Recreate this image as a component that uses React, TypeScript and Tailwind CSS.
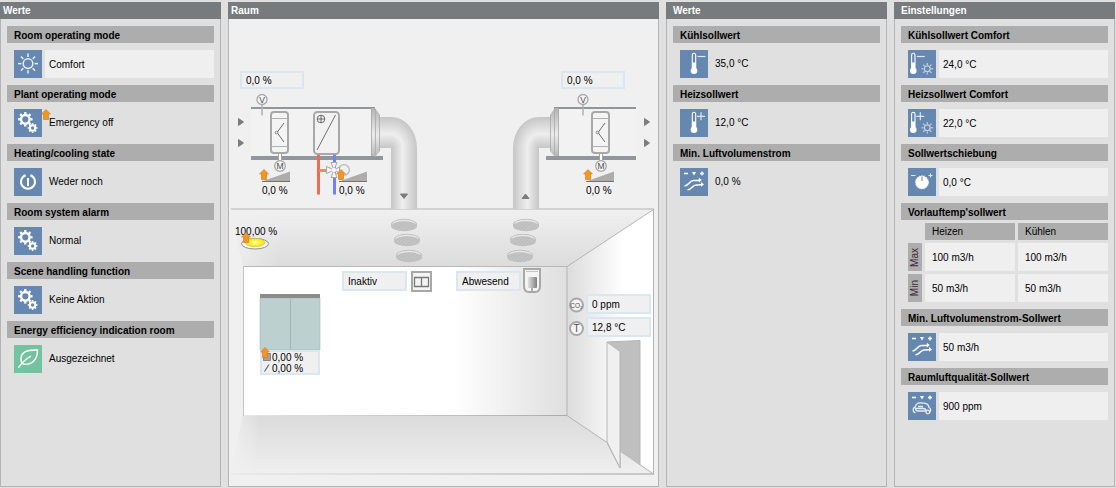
import React from "react"
import clsx from "clsx"

type IconName = 'sun' | 'gears' | 'power' | 'leaf' | 'tempMinus' | 'tempPlus' | 'tempMinusSun' | 'tempPlusSun' | 'dial' | 'airflow' | 'airQuality'

interface Row {
    label: string
    value: string
    icon: IconName
    editable?: boolean
    overridden?: boolean
}

const roomValues: Row[] = [
    { label: 'Room operating mode', value: 'Comfort', icon: 'sun', editable: true },
    { label: 'Plant operating mode', value: 'Emergency off', icon: 'gears', overridden: true },
    { label: 'Heating/cooling state', value: 'Weder noch', icon: 'power' },
    { label: 'Room system alarm', value: 'Normal', icon: 'gears' },
    { label: 'Scene handling function', value: 'Keine Aktion', icon: 'gears' },
    { label: 'Energy efficiency indication room', value: 'Ausgezeichnet', icon: 'leaf' },
]

const setpointValues: Row[] = [
    { label: 'Kühlsollwert', value: '35,0 °C', icon: 'tempMinus' },
    { label: 'Heizsollwert', value: '12,0 °C', icon: 'tempPlus' },
    { label: 'Min. Luftvolumenstrom', value: '0,0 %', icon: 'airflow' },
]

const settings: Row[] = [
    { label: 'Kühlsollwert Comfort', value: '24,0 °C', icon: 'tempMinusSun', editable: true },
    { label: 'Heizsollwert Comfort', value: '22,0 °C', icon: 'tempPlusSun', editable: true },
    { label: 'Sollwertschiebung', value: '0,0 °C', icon: 'dial', editable: true },
]

const airSettings: Row[] = [
    { label: 'Min. Luftvolumenstrom-Sollwert', value: '50 m3/h', icon: 'airflow', editable: true },
    { label: 'Raumluftqualität-Sollwert', value: '900 ppm', icon: 'airQuality', editable: true },
]

const flowLimits = [
    { name: 'Max', heat: '100 m3/h', cool: '100 m3/h' },
    { name: 'Min', heat: '50 m3/h', cool: '50 m3/h' },
]

const Rays = ({ x, y, from, to }: { x: number, y: number, from: number, to: number }) => (
    <>
        {[0, 45, 90, 135, 180, 225, 270, 315].map((deg) => {
            const c = Math.cos((deg * Math.PI) / 180)
            const s = Math.sin((deg * Math.PI) / 180)
            return <line key={deg} x1={x + c * from} y1={y + s * from} x2={x + c * to} y2={y + s * to} />
        })}
    </>
)

const Gear = ({ x, y, r, hole, teeth }: { x: number, y: number, r: number, hole: number, teeth: number }) => (
    <g>
        <circle cx={x} cy={y} r={(r + hole) / 2} fill="none" stroke="#fff" strokeWidth={r - hole} />
        <g stroke="#fff" strokeWidth={r * 0.42}>
            {Array.from({ length: teeth }, (_, i) => {
                const a = (i * 2 * Math.PI) / teeth
                return <line key={i} x1={x + Math.cos(a) * r * 0.9} y1={y + Math.sin(a) * r * 0.9} x2={x + Math.cos(a) * r * 1.32} y2={y + Math.sin(a) * r * 1.32} />
            })}
        </g>
    </g>
)

const Thermometer = ({ x, sign }: { x: number, sign: 'minus' | 'plus' }) => (
    <g>
        <path d={`M${x - 1.7} 18V5a1.7 1.7 0 0 1 3.4 0v13`} fill="none" stroke="#fff" strokeWidth="1.1" />
        <rect x={x - 1.7} y="12.5" width="3.4" height="7" fill="#fff" />
        <circle cx={x} cy="20.8" r="3.3" fill="#fff" />
        <path d={sign === 'minus' ? `M${x + 3.5} 6.5h8` : `M${x + 3} 7.3h8m-4-4v8`} stroke="#dfe8f2" strokeWidth="1.2" />
    </g>
)

const SmallSun = () => (
    <g stroke="#c3d2e4" strokeWidth="1.2" fill="none">
        <circle cx="19.3" cy="18.8" r="2.9" />
        <Rays x={19.3} y={18.8} from={3.8} to={5.8} />
    </g>
)

const Adjust = () => (
    <g>
        <path d="M4 5.5h4m12 0h4m-2-2v4" stroke="#fff" strokeWidth="1.3" />
        <path d="M12 4h4l-2 3.600z" fill="#fff" />
    </g>
)

const shapes: Record<IconName, React.ReactNode> = {
    sun: (
        <g stroke="#e9eff6" strokeWidth="1.5" fill="none">
            <circle cx="14" cy="13.6" r="4.8" />
            <Rays x={14} y={13.6} from={6.6} to={10} />
        </g>
    ),
    gears: (
        <>
            <Gear x={11.3} y={10.3} r={5.5} hole={3.1} teeth={8} />
            <Gear x={18.6} y={19} r={3.7} hole={1.7} teeth={8} />
        </>
    ),
    power: (
        <g stroke="#fff" strokeWidth="2" fill="none">
            <path d="M11.6 7.2a7 7 0 1 0 4.8 0" />
            <path d="M14 10v8" />
        </g>
    ),
    leaf: (
        <g stroke="#fff" strokeWidth="1.4" fill="none">
            <path d="M23.5 5C15 4.6 7.5 6.6 7 13c-.2 3 .8 5.5 2.5 6 6 1.5 14-2 14-14z" />
            <path d="M4.3 22.8C7 19 11 14.5 17 11" />
        </g>
    ),
    tempMinus: <Thermometer x={14} sign="minus" />,
    tempPlus: <Thermometer x={14} sign="plus" />,
    tempMinusSun: <><Thermometer x={5.3} sign="minus" /><SmallSun /></>,
    tempPlusSun: <><Thermometer x={5.3} sign="plus" /><SmallSun /></>,
    dial: (
        <>
            <circle cx="14" cy="14.3" r="6.6" fill="#fff" stroke="#d7e2ee" strokeWidth="1" strokeDasharray="1.5 1" />
            <path d="M14 8.5V13" stroke="#7f97b5" strokeWidth="1.2" />
            <path d="M3 7.500h4.500m13 0h4m-2-2v4" stroke="#dfe8f2" strokeWidth="1.2" />
        </>
    ),
    airflow: (
        <>
            <Adjust />
            <g stroke="#fff" strokeWidth="1.6" fill="none">
                <path d="M4.500 18c4 0 5-5.500 9-5.500 2.500 0 4 .3 6-.3" />
                <path d="M7.500 21.800c4 .2 5-4.800 8.500-4.800 2 0 4 .2 6-.4" />
            </g>
            <path d="M18.800 9.800l3 2.200-3 2.400zM21 14l3 2.400-3 2.400z" fill="#fff" />
        </>
    ),
    airQuality: (
        <>
            <Adjust />
            <g stroke="#e3ebf4" strokeWidth="1.3" fill="none">
                <path d="M7.5 20.5c-3 0-3-5-.3-5.500.5-4 5-4.800 7.300-3.800 3.500-.5 6.500 1.500 6.500 4.300 2.500 1 2 4.500 0 4.800" />
                <path d="M7.500 16.500h8c2 0 2.500 1.500 2.500 2.500h-8c-2 0-2.500-1.200-2.500-2.500zM10 14.500h5" />
                <circle cx="19.8" cy="20" r="1.8" />
            </g>
        </>
    ),
}

const StateIcon = ({ name }: { name: IconName }) => (
    <svg viewBox="0 0 28 28" className={clsx('h-7 w-7 shrink-0', name === 'leaf' ? 'bg-[#74c3a0]' : 'bg-[#6587b0]')} aria-hidden="true">
        {shapes[name]}
    </svg>
)

// Orange marker, shown when a value is overridden by hand
const OverrideArrow = ({ className }: { className: string }) => (
    <svg viewBox="0 0 10 11" className={clsx('absolute h-[11px] w-2.5', className)} aria-hidden="true">
        <path d="M5 .5L9.4 5H7.5v5.5h-5V5H.6z" fill="#f7941e" stroke="#c98432" strokeWidth=".7" />
    </svg>
)

const Panel = ({ title, main, indent, children }: { title: string, main?: boolean, indent?: boolean, children: React.ReactNode }) => (
    <section className={clsx('flex min-w-0 flex-col border-b border-[#b4b4b4]', main && 'bg-[#f0f0f0]')}>
        <h2 className={clsx('h-[17px] bg-[#777b7e] text-[10px] leading-[17px] font-bold text-white', indent ? 'pl-[7px]' : 'pl-[3px]')}>{title}</h2>
        <div className="grow border-x border-[#b4b4b4]">{children}</div>
    </section>
)

const Heading = ({ id, htmlFor, children }: { id?: string, htmlFor?: string, children: React.ReactNode }) => (
    <h3 id={id} className="h-[17px] bg-[#adadad] pl-[7px] leading-[19px] font-bold">
        {htmlFor ? <label htmlFor={htmlFor}>{children}</label> : children}
    </h3>
)

const ValueRow = ({ row }: { row: Row }) => {
    const id = row.label.toLowerCase().replace(/[^a-z]+/g, '-')
    return (
        <div className="flex flex-col gap-[7px]">
            <Heading id={`${id}-title`} htmlFor={row.editable ? id : undefined}>{row.label}</Heading>
            <div className="relative flex gap-[3px] pl-[7px]">
                <StateIcon name={row.icon} />
                {row.overridden && <OverrideArrow className="left-[34px] top-0" />}
                {row.editable ? (
                    <input id={id} type="text" defaultValue={row.value} className="h-7 min-w-0 grow bg-[#efefef] pl-1 outline-none" />
                ) : (
                    <p aria-labelledby={`${id}-title`} className="h-7 pl-1 leading-7">{row.value}</p>
                )}
            </div>
        </div>
    )
}

const Rows = ({ rows }: { rows: Row[] }) => (
    <div className="flex flex-col gap-[7px]">
        {rows.map((row) => <ValueRow key={row.label} row={row} />)}
    </div>
)

const FlowLimits = () => (
    <div>
        <Heading>Vorlauftemp'sollwert</Heading>
        <table className="ml-1 w-[calc(100%-1px)] table-fixed border-separate border-spacing-[3px]">
            <thead>
                <tr className="h-[17px] text-left leading-[17px]">
                    <td className="w-3.5 p-0"></td>
                    <th scope="col" className="bg-[#adadad] p-0 pl-[7px] font-normal">Heizen</th>
                    <th scope="col" className="bg-[#adadad] p-0 pl-[7px] font-normal">Kühlen</th>
                </tr>
            </thead>
            <tbody>
                {flowLimits.map((limit) => (
                    <tr key={limit.name} className="h-7">
                        <th scope="row" className="bg-[#adadad] p-0 font-normal text-[#3d2440]">
                            <span className="mx-auto block rotate-180 leading-[14px] [writing-mode:vertical-rl]">{limit.name}</span>
                        </th>
                        <td className="p-0">
                            <input type="text" aria-label={`Heizen ${limit.name}`} defaultValue={limit.heat} className="block h-7 w-full bg-[#efefef] pl-[7px] outline-none" />
                        </td>
                        <td className="p-0">
                            <input type="text" aria-label={`Kühlen ${limit.name}`} defaultValue={limit.cool} className="block h-7 w-full bg-[#efefef] pl-[7px] outline-none" />
                        </td>
                    </tr>
                ))}
            </tbody>
        </table>
        <div className="mt-1">
            <Rows rows={airSettings} />
        </div>
    </div>
)

const PlantValue = ({ label, value, className }: { label: string, value: string, className: string }) => (
    <input
        type="text"
        aria-label={label}
        defaultValue={value}
        className={clsx('absolute border-2 border-[#dae7f0] bg-[#f0f0f0] pl-1 outline-none', className)}
    />
)

const Actuator = ({ className }: { className: string }) => (
    <div className={clsx('absolute h-7 w-8', className)}>
        <svg viewBox="0 0 32 12" className="ml-0.5 h-3 w-8" aria-hidden="true">
            <path d="M0 11.5L28 1.500v10z" fill="#adadad" />
            <path d="M0 11.500h28" stroke="#7d706c" strokeWidth="1" />
        </svg>
        <OverrideArrow className="-left-px -top-px" />
        <p className="pl-0.5 leading-[18px] whitespace-nowrap">0,0 %</p>
    </div>
)

const Sensor = ({ x, y, r, text }: { x: number, y: number, r: number, text: string }) => (
    <g>
        <circle cx={x} cy={y} r={r} fill="#f4f4f4" stroke="#a8a8a8" strokeWidth={r > 6 ? 2 : 1.3} />
        <text x={x} y={y + (text === 'CO₂' ? 2.5 : 3.2)} textAnchor="middle" fontSize={text === 'CO₂' ? 6.5 : r > 6 ? 10 : 8.5} fill="#4d4d4d">{text}</text>
    </g>
)

const Damper = ({ x }: { x: number }) => (
    <g>
        <rect x={x + 1} y="112" width="17" height="41" rx="3" fill="#f4f4f4" stroke="#a8a8a8" strokeWidth="2" />
        <path d={`M${x + 1} 118.500h17M${x + 1} 146.500h17`} stroke="#b0b0b0" />
        <path d={`M${x + 14} 123l-7 9.500 7 9.500`} fill="none" stroke="#6b6b6b" />
        <circle cx={x + 6.5} cy="132.5" r="1.3" fill="#f4f4f4" stroke="#6b6b6b" strokeWidth=".8" />
        <path d={`M${x + 8.5} 154v6.500M${x + 11.5} 154v6.500`} stroke="#a3a3a3" />
        <path d={`M${x + 10} 154v7`} stroke="#fff" strokeWidth="2" />
        <Sensor x={x + 10} y={166} r={5.3} text="M" />
    </g>
)

const Diffuser = ({ x, y }: { x: number, y: number }) => (
    <g>
        <ellipse cx={x} cy={y - 0.5} rx="13" ry="5.8" fill="#b8b8b8" />
        <ellipse cx={x} cy={y - 0.2} rx="12.2" ry="5.2" fill="#e6e6e6" />
        <ellipse cx={x} cy={y + 1.2} rx="12.8" ry="5" fill="#c4c4c4" />
        <ellipse cx={x} cy={y + 1.2} rx="12.8" ry="5" fill="url(#hatch)" />
    </g>
)

const Elbow = () => (
    <g>
        <rect x="379" y="117" width="12.5" height="31" fill="url(#pipeAcross)" />
        <path d="M391 117a26 31 0 0 1 26 31h-26z" fill="url(#elbow)" />
        <rect x="391" y="147.8" width="26" height="61.2" fill="url(#pipeDown)" />
        <path d="M375 108l5 7v36l-5 6z" fill="url(#flange)" />
        <rect x="371" y="108" width="4" height="48" fill="url(#flange)" />
        <path d="M371.500 108v48M375.500 109v46M379.500 115v36" stroke="#a8a8a8" strokeWidth=".8" />
    </g>
)

const PlantDrawing = () => (
    <svg viewBox="229 19 429 466" className="block h-[466px] w-[429px]" aria-hidden="true">
        <defs>
            <linearGradient id="pipeDown">
                <stop offset="0" stopColor="#c6c6c6" />
                <stop offset=".45" stopColor="#eeeeee" />
                <stop offset="1" stopColor="#c6c6c6" />
            </linearGradient>
            <linearGradient id="pipeAcross" x2="0" y2="1">
                <stop offset="0" stopColor="#c6c6c6" />
                <stop offset=".55" stopColor="#eeeeee" />
                <stop offset="1" stopColor="#c6c6c6" />
            </linearGradient>
            <radialGradient id="elbow" gradientUnits="userSpaceOnUse" cx="0" cy="0" r="1" gradientTransform="translate(391 148) scale(26 31)">
                <stop offset="0" stopColor="#c6c6c6" />
                <stop offset=".45" stopColor="#eeeeee" />
                <stop offset="1" stopColor="#c6c6c6" />
            </radialGradient>
            <linearGradient id="flange" x2="0" y2="1">
                <stop offset="0" stopColor="#b3b3b3" />
                <stop offset=".55" stopColor="#ececec" />
                <stop offset="1" stopColor="#b8b8b8" />
            </linearGradient>
            <linearGradient id="ceiling" x2="0" y2="1">
                <stop offset="0" stopColor="#f0f0f0" />
                <stop offset="1" stopColor="#dcdcdc" />
            </linearGradient>
            <linearGradient id="floor" x2="0" y2="1">
                <stop offset="0" stopColor="#dbdbdb" />
                <stop offset="1" stopColor="#efefef" />
            </linearGradient>
            <linearGradient id="fadeLeft">
                <stop offset="0" stopColor="#f0f0f0" stopOpacity=".9" />
                <stop offset="1" stopColor="#f0f0f0" stopOpacity="0" />
            </linearGradient>
            <linearGradient id="backWall">
                <stop offset=".65" stopColor="#ffffff" />
                <stop offset="1" stopColor="#dfdfdf" />
            </linearGradient>
            <linearGradient id="sideWall">
                <stop offset="0" stopColor="#dcdcdc" />
                <stop offset=".65" stopColor="#ffffff" />
            </linearGradient>
            <linearGradient id="edge">
                <stop offset="0" stopColor="#e6e6e6" />
                <stop offset="1" stopColor="#ababab" />
            </linearGradient>
            <linearGradient id="body">
                <stop offset="0" stopColor="#e0e0e0" />
                <stop offset="1" stopColor="#808080" />
            </linearGradient>
            <radialGradient id="lamp">
                <stop offset="0" stopColor="#fffde0" />
                <stop offset=".4" stopColor="#fff34d" />
                <stop offset="1" stopColor="#f5e400" />
            </radialGradient>
            <pattern id="hatch" width="2.5" height="2.5" patternUnits="userSpaceOnUse" patternTransform="rotate(45)">
                <path d="M0 0v2.500" stroke="#b0b0b0" strokeWidth=".8" />
            </pattern>
        </defs>

        {/* room */}
        <path d="M231 209.500h422.500L567 266H243z" fill="url(#ceiling)" />
        <path d="M231 209.500h49V266h-37z" fill="url(#fadeLeft)" />
        <path d="M243 415h324l86.500 59H231z" fill="url(#floor)" />
        <path d="M243 415h17l-6 59h-23z" fill="url(#fadeLeft)" />
        <rect x="243" y="266" width="324" height="149" fill="url(#backWall)" />
        <path d="M567 266l86.500-56.500V474L567 415z" fill="url(#sideWall)" />
        <rect x="231" y="208" width="423" height="2" fill="#d2d2d2" />
        <rect x="231" y="473" width="423" height="2" fill="url(#edge)" opacity=".6" />
        <rect x="243" y="266" width="324" height="1" fill="#b8b8b8" />
        <rect x="243" y="415" width="324" height="1" fill="url(#edge)" />
        <rect x="243" y="266" width="1" height="150" fill="#c4c4c4" />
        <path d="M653.500 209.500L567 266.500v149l40 27 13 25.500v-17l33.500 23z" fill="none" stroke="#b3b3b3" />
        <path d="M607 342l33-1.500V465l-20-14v-99.500z" fill="#bfbfbf" />
        <path d="M607 342l13 9.500V468l-13-26z" fill="#f0f0f0" />
        <path d="M607 442V342l33-1.500V465M607 342l13 9.500" fill="none" stroke="#b5b5b5" />
        <path d="M620 351.500V468l-13-26" fill="none" stroke="#b3b3b3" />

        {/* window */}
        <rect x="260" y="298" width="60" height="52" fill="#bcd0cf" stroke="#a9bab9" strokeWidth=".6" />
        <path d="M290.500 298v52" stroke="#a3b4b3" />
        <rect x="260" y="294" width="60" height="4" fill="#8b8b8b" />

        {/* ducts */}
        <rect x="251" y="109" width="120" height="47" fill="#f2f2f2" />
        <rect x="251" y="107" width="124" height="2" fill="#8f979d" />
        <rect x="251" y="156" width="132" height="4" fill="#8f979d" />
        <rect x="558" y="109" width="78" height="47" fill="#f2f2f2" />
        <rect x="554" y="107" width="82" height="2" fill="#8f979d" />
        <rect x="546" y="156" width="90" height="4" fill="#8f979d" />
        <Elbow />
        <g transform="translate(930 0) scale(-1 1)">
            <Elbow />
        </g>
        <path d="M238.500 118.500l5 3.500-5 3.500zM238.500 139.500l5 3.500-5 3.500zM644.500 118.500l5 3.500-5 3.500zM644.500 139.500l5 3.500-5 3.500zM400.500 194h7l-3.500 4.500zM522 198.500h7l-3.500-4.500z" fill="#7d7d7d" stroke="#7d7d7d" />

        <path d="M262 104v11.500M583 104v11.500" stroke="#b0b0b0" strokeWidth="1.5" />
        <Sensor x={262} y={99.5} r={5} text="V" />
        <Sensor x={583} y={99.5} r={5} text="V" />
        <Damper x={270} />
        <Damper x={591} />

        {/* heating coil with mixing valve */}
        <rect x="314" y="112" width="25" height="42" rx="3.5" fill="#f2f2f2" stroke="#a8a8a8" strokeWidth="2" />
        <path d="M317 150l18.500-35" stroke="#707070" />
        <circle cx="321" cy="119" r="3.8" fill="none" stroke="#5c5c5c" strokeWidth=".9" />
        <path d="M317.500 119h7M321 115.500v7" stroke="#5c5c5c" strokeWidth=".9" />
        <path d="M318.500 155v39.500" stroke="#ee6b52" strokeWidth="3" />
        <path d="M319 170.500h8" stroke="#f08571" strokeWidth="3" />
        <path d="M334.500 155v39.500" stroke="#7381f3" strokeWidth="3" />
        <circle cx="344" cy="170" r="5.3" fill="#f0f0f0" stroke="#b8b8b8" strokeWidth="1.3" />
        <path d="M334 170l-3-7.500h6zM334 170l-3 7.500h6zM334 170l-7.500-3.500v7zM334 170l5.500-3v6z" fill="#f4f4f4" stroke="#a8a8a8" />
        <circle cx="334" cy="170" r="2.2" fill="#f4f4f4" />

        {/* air outlets */}
        <Diffuser x={404} y={225} />
        <Diffuser x={407} y={240} />
        <Diffuser x={409} y={256} />
        <Diffuser x={526} y={225} />
        <Diffuser x={523} y={240} />
        <Diffuser x={520} y={256} />

        {/* lamp */}
        <ellipse cx="255" cy="243.7" rx="13.5" ry="5.3" fill="#f8f8f8" stroke="#8f8f8f" />
        <ellipse cx="255" cy="242.5" rx="10" ry="4.2" fill="url(#lamp)" stroke="#b9b06a" strokeWidth=".5" />

        {/* presence detector */}
        <path d="M524 269h16v17q0 6-5 6h-6q-5 0-5-6z" fill="#f4f4f4" stroke="#a8a8a8" strokeWidth="2" />
        <path d="M526 271.500h12" stroke="#c4c4c4" />
        <rect x="528" y="277" width="9" height="11" rx="1" fill="url(#body)" />
        <path d="M532 288v3" stroke="#6b6b6b" />

        <Sensor x={576.5} y={305} r={6.5} text="CO₂" />
        <Sensor x={576.5} y={328.5} r={6.5} text="T" />
    </svg>
)

const Plant = () => (
    <div className="relative mx-auto w-[429px]">
        <PlantDrawing />
        <PlantValue label="Zuluft" value="0,0 %" className="left-[11px] top-[52px] h-[18px] w-16" />
        <PlantValue label="Abluft" value="0,0 %" className="left-[332px] top-[52px] h-[18px] w-16" />
        <PlantValue label="Fensterkontakt" value="Inaktiv" className="left-[113px] top-[252px] h-5 w-[65px]" />
        <PlantValue label="Präsenz" value="Abwesend" className="left-[227px] top-[252px] h-5 w-[65px]" />
        <PlantValue label="CO2" value="0 ppm" className="left-[357px] top-[275px] h-5 w-[65px]" />
        <PlantValue label="Raumtemperatur" value="12,8 °C" className="left-[357px] top-[298px] h-5 w-[65px]" />
        <button type="button" aria-label="Fenster" className="absolute left-[182px] top-[252px] h-[21px] w-[21px] border-2 border-[#a8a8a8] bg-[#f4f4f4]">
            <svg viewBox="0 0 17 17" className="h-[17px] w-[17px]" aria-hidden="true">
                <path d="M1.500 4.500h14v9h-14zM8.500 4.500v9" fill="none" stroke="#777" strokeWidth="1.3" />
            </svg>
        </button>
        <Actuator className="left-[31px] top-[151px]" />
        <Actuator className="left-[108px] top-[151px]" />
        <Actuator className="left-[355px] top-[151px]" />
        <p className="absolute left-1.5 top-[205px] leading-4 whitespace-nowrap">100,00 %</p>
        <OverrideArrow className="left-3 top-[213px]" />
        <div className="absolute left-[31px] top-[331px] h-[25px] w-[60px] border-2 border-[#dae7f0] bg-[#f0f0f0] pl-2.5 leading-[11px] whitespace-nowrap">
            <svg viewBox="0 0 8 21" className="absolute left-px top-0 h-[21px] w-2" aria-hidden="true">
                <rect x=".5" y="1.5" width="7" height="7" fill="#a3a3a3" stroke="#777" strokeWidth=".8" />
                <path d="M1.500 19.500L6 12.500" stroke="#666" strokeWidth="1.2" />
            </svg>
            <p>0,00 %</p>
            <p>0,00 %</p>
        </div>
        <OverrideArrow className="left-[31px] top-[328px]" />
    </div>
)

const App = () => {
    return (
        <main className="grid min-h-screen grid-cols-[221fr_431fr_221fr_221fr] gap-[7px] bg-[#e0e0e0] pt-0.5 pr-px pb-px font-['Liberation_Sans',Arial,sans-serif] text-[10px] text-black">
            <Panel title="Werte">
                <div className="px-1.5 py-[7px]">
                    <Rows rows={roomValues} />
                </div>
            </Panel>
            <Panel title="Raum" main>
                <Plant />
            </Panel>
            <Panel title="Werte" indent>
                <div className="px-1.5 py-[7px]">
                    <Rows rows={setpointValues} />
                </div>
            </Panel>
            <Panel title="Einstellungen" indent>
                <div className="flex flex-col gap-[7px] px-1.5 py-[7px]">
                    <Rows rows={settings} />
                    <FlowLimits />
                </div>
            </Panel>
        </main>
    )
}
export default App
